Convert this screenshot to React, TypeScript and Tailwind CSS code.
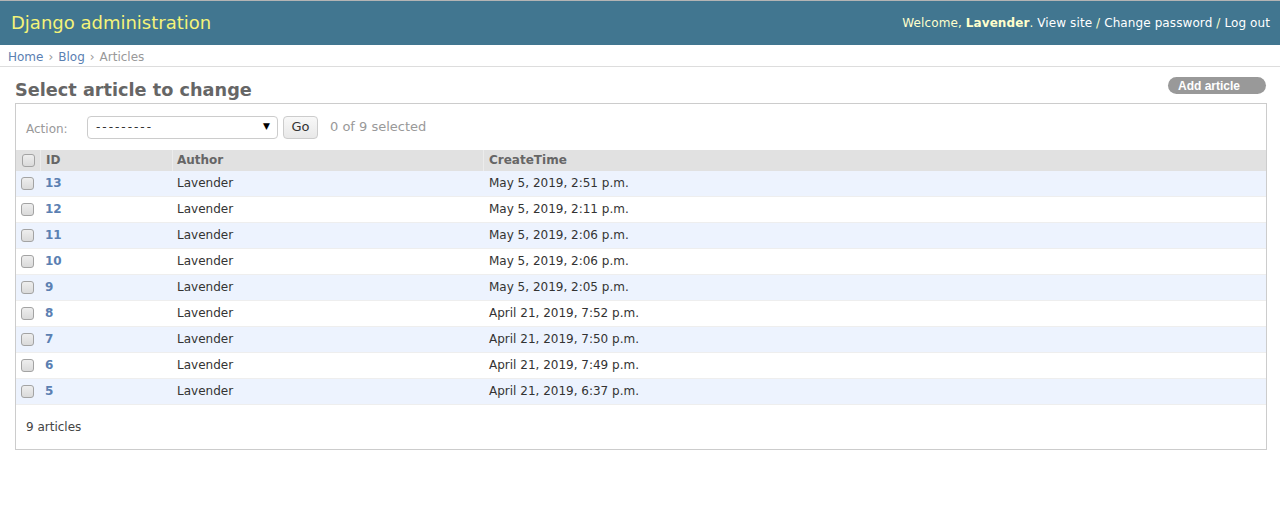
import React from "react";

const rows = [
  { id: 13, author: "Lavender", time: "May 5, 2019, 2:51 p.m." },
  { id: 12, author: "Lavender", time: "May 5, 2019, 2:11 p.m." },
  { id: 11, author: "Lavender", time: "May 5, 2019, 2:06 p.m." },
  { id: 10, author: "Lavender", time: "May 5, 2019, 2:06 p.m." },
  { id: 9, author: "Lavender", time: "May 5, 2019, 2:05 p.m." },
  { id: 8, author: "Lavender", time: "April 21, 2019, 7:52 p.m." },
  { id: 7, author: "Lavender", time: "April 21, 2019, 7:50 p.m." },
  { id: 6, author: "Lavender", time: "April 21, 2019, 7:49 p.m." },
  { id: 5, author: "Lavender", time: "April 21, 2019, 6:37 p.m." },
];

function Box() {
  return (
    <div className="w-[13px] h-[13px] rounded-[3px] border border-[#a3a3a3] bg-gradient-to-b from-[#eeeeee] to-[#dadada]" />
  );
}

export default function App() {
  return (
    <div className="w-[1280px] h-[518px] bg-white text-[12px] text-[#333] font-['DejaVu_Sans',Verdana,sans-serif] overflow-hidden">
      <div className="h-px bg-[#b4b4b4]" />
      <div className="h-[44px] bg-[#417690] flex items-center justify-between pl-[11px] pr-[10px]">
        <div className="text-[18px] text-[#f4f379] leading-none">Django administration</div>
        <div className="text-[12px] text-[#ffffcc] tracking-[0.1px]">
          Welcome, <span className="font-bold">Lavender</span>.{" "}
          <span className="text-white">View site</span> / <span className="text-white">Change password</span> /{" "}
          <span className="text-white">Log out</span>
        </div>
      </div>
      <div className="h-[22px] border-b border-[#dddddd] flex items-center pt-[2px] pl-[8px] text-[12px]">
        <span className="text-[#5b80b2]">Home</span>
        <span className="text-[#999] mx-[5px]">›</span>
        <span className="text-[#5b80b2]">Blog</span>
        <span className="text-[#999] mx-[5px]">›</span>
        <span className="text-[#999]">Articles</span>
      </div>

      <div className="pl-[15px] pr-[13px]">
        <div className="h-[36px] flex items-start justify-between">
          <h1 className="mt-[12px] text-[17.7px] leading-[22px] font-bold text-[#666]">Select article to change</h1>
          <div className="mt-[10px] mr-px h-[17px] rounded-full bg-[#999] pl-[10px] pr-[26px] flex items-center text-white font-bold text-[12px] font-['Liberation_Sans',Arial,sans-serif]">
            Add article
          </div>
        </div>

        <div className="border border-[#cccccc]">
          <div className="h-[46px] flex items-center pl-[10px]">
            <span className="w-[61px] mt-[4px] text-[#999]">Action:</span>
            <div className="w-[191px] h-[23px] border border-[#cccccc] rounded-[4px] flex items-center justify-between pl-[8px] pr-[7px] bg-white">
              <span className="text-[#333] tracking-[2px]">---------</span>
              <span className="text-[9px] text-black">▼</span>
            </div>
            <div className="ml-[5px] w-[35px] h-[23px] border border-[#cccccc] rounded-[4px] bg-gradient-to-b from-[#f8f8f8] to-[#e8e8e8] flex items-center justify-center text-[13px] text-[#333]">
              Go
            </div>
            <span className="ml-[12px] text-[#999] text-[13px]">0 of 9 selected</span>
          </div>

          <div className="grid grid-cols-[24px_132px_311px_1fr]">
            <div className="h-[21px] bg-[#e1e1e1] flex items-center pl-[6px]">
              <Box />
            </div>
            <div className="h-[21px] bg-[#e1e1e1] border-l border-[#ececec] flex items-center pb-[2px] pl-[5px] font-bold text-[#666]">ID</div>
            <div className="h-[21px] bg-[#e1e1e1] border-l border-[#ececec] flex items-center pb-[2px] pl-[4px] font-bold text-[#666]">Author</div>
            <div className="h-[21px] bg-[#e1e1e1] border-l border-[#ececec] flex items-center pb-[2px] pl-[5px] font-bold text-[#666]">CreateTime</div>

            {rows.map((r, i) => {
              const bg = i % 2 === 0 ? "bg-[#edf3fe]" : "bg-white";
              return (
                <React.Fragment key={r.id}>
                  <div className={`h-[26px] border-b border-[#eeeeee] flex items-center pl-[5px] ${bg}`}>
                    <Box />
                  </div>
                  <div className={`h-[26px] border-b border-[#eeeeee] flex items-center pb-[2px] pl-[5px] font-bold text-[#5b80b2] ${bg}`}>
                    {r.id}
                  </div>
                  <div className={`h-[26px] border-b border-[#eeeeee] flex items-center pb-[2px] pl-[5px] ${bg}`}>{r.author}</div>
                  <div className={`h-[26px] border-b border-[#eeeeee] flex items-center pb-[2px] pl-[6px] ${bg}`}>{r.time}</div>
                </React.Fragment>
              );
            })}
          </div>

          <div className="h-[45px] border-t border-[#dddddd] -mt-px flex items-center pl-[10px] text-[#444] text-[12px]">
            9 articles
          </div>
        </div>
      </div>
    </div>
  );
}
